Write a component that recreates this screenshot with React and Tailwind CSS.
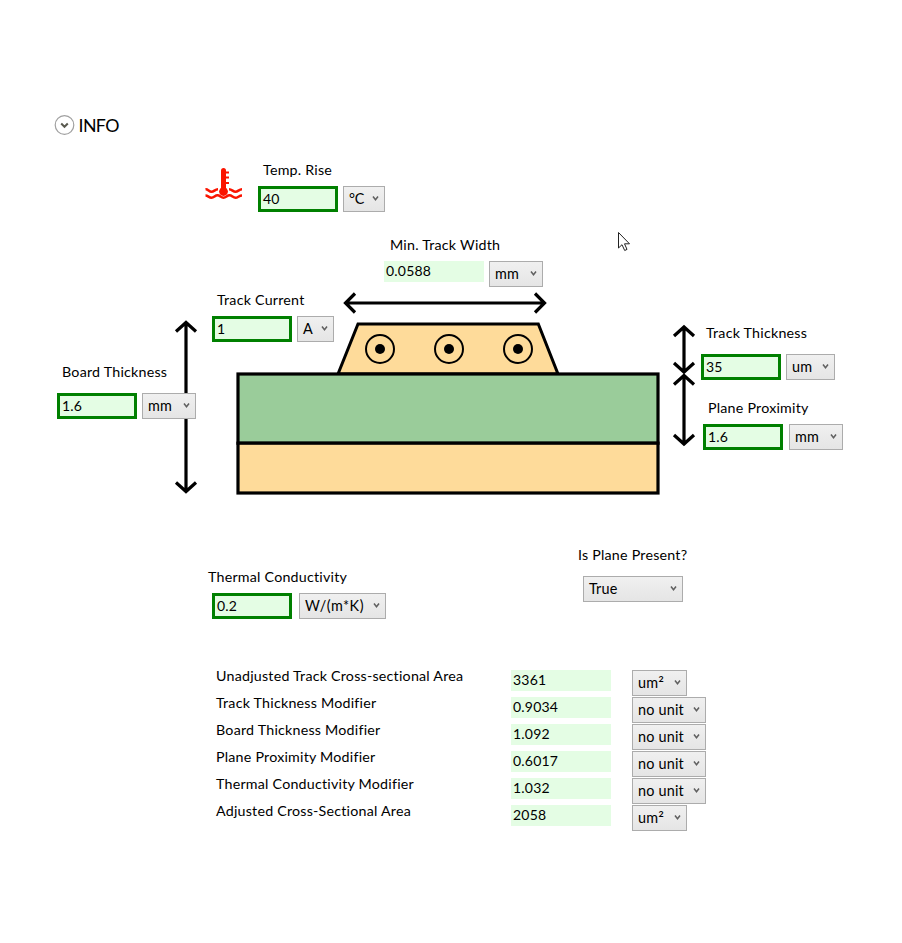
import React from "react";

function Label({ children, className = "" }) {
  return <div className={`h-5 whitespace-nowrap text-[14.25px] leading-5 tracking-[0.22px] ${className}`}>{children}</div>;
}

function Input({ value }) {
  return (
    <div className="h-[26px] w-20 shrink-0 border-[3px] border-[#008000] bg-[#e4fde4] pl-[2px] leading-5">
      {value}
    </div>
  );
}

function Output({ value }) {
  return <div className="h-[21px] w-[100px] shrink-0 bg-[#e4fde4] pl-[2px] leading-5">{value}</div>;
}

function Combo({ children, className = "", textClass = "" }) {
  return (
    <div
      className={`flex h-[26px] shrink-0 items-start justify-between border border-[#acacac] bg-linear-to-b from-[#f0f0f0] to-[#e5e5e5] pl-[5px] pr-[5px] text-[14.4px] leading-6 ${className}`}
    >
      <span className={`whitespace-nowrap ${textClass}`}>{children}</span>
      <svg className="mt-[8px] shrink-0" width="7" height="7" viewBox="0 0 7 7" fill="none">
        <path d="M1 1.500 L3.500 4.800 L6 1.500" stroke="#606060" strokeWidth="1.5" />
      </svg>
    </div>
  );
}

function Unit({ name }) {
  return name === "um²" ? (
    <>
      um<span className="align-[-2px] text-[17px] leading-none">²</span>
    </>
  ) : (
    name
  );
}

function TempIcon() {
  return (
    <svg width="38" height="36" viewBox="0 0 38 36" fill="none" stroke="#fa1400">
      <path d="M18.500 4.500 V25" strokeWidth="5" strokeLinecap="round" />
      <circle cx="18.500" cy="25.500" r="4.400" fill="#fa1400" stroke="none" />
      <path d="M20 6.500 H24 M20 11.500 H24 M20 17 H24" strokeWidth="2" />
      <path d="M0.500 23.300 C3 23 4 25.800 6.500 25.800 C9 25.800 10 23.300 13 23.300" strokeWidth="2.5" />
      <path d="M24 23.300 C27 23.300 28 25.800 30.500 25.800 C33 25.800 34 23.300 37 23.300" strokeWidth="2.5" />
      <path
        d="M0.500 29.500 C3 29.500 4 31.800 6.500 31.800 C9 31.800 10 29.300 12.500 29.300 C15 29.300 16 31.800 18.500 31.800 C21 31.800 22 29.300 24.500 29.300 C27 29.300 28 31.800 30.500 31.800 C33 31.800 34 29.500 37 29.500"
        strokeWidth="2.5"
      />
    </svg>
  );
}

function CurrentSymbol({ cx }) {
  return (
    <g>
      <circle cx={cx} cy="59" r="14" fill="none" stroke="#000" strokeWidth="2" />
      <circle cx={cx} cy="59" r="5" fill="#000" />
    </g>
  );
}

const results = [
  ["Unadjusted Track Cross-sectional Area", "3361", "um²"],
  ["Track Thickness Modifier", "0.9034", "no unit"],
  ["Board Thickness Modifier", "1.092", "no unit"],
  ["Plane Proximity Modifier", "0.6017", "no unit"],
  ["Thermal Conductivity Modifier", "1.032", "no unit"],
  ["Adjusted Cross-Sectional Area", "2058", "um²"],
];

export default function App() {
  return (
    <main className="relative h-[943px] w-[902px] overflow-hidden bg-white pt-[115px] font-[Lato,'Liberation_Sans',sans-serif] text-[14px] tracking-[0.2px] text-black">
      <header className="flex h-5 items-center pl-[54px]">
        <svg width="21" height="21" viewBox="0 0 21 21" fill="none">
          <circle cx="10.500" cy="10" r="9.300" stroke="#a0a0a0" strokeWidth="1.2" />
          <path d="M7.200 8.500 L10.500 11.800 L13.800 8.500" stroke="#5a5a50" strokeWidth="2" />
        </svg>
        <span className="ml-[3.5px] text-[17.8px] leading-5 tracking-[-0.6px]">INFO</span>
      </header>

      <section className="mt-[25px] flex h-[52px] pl-[205px]">
        <div className="mt-[6px] w-[53px]">
          <TempIcon />
        </div>
        <div>
          <Label className="pl-[5px]">Temp. Rise</Label>
          <div className="mt-[6px] flex gap-[5px]">
            <Input value="40" />
            <Combo className="w-[42px]" textClass="tracking-[-0.3px]">°C</Combo>
          </div>
        </div>
      </section>

      <section className="mt-[23px] flex h-[260px] pl-[57px]">
        <div className="relative w-[155px] pt-[127px]">
          <svg className="absolute left-[117px] top-[84px]" width="24" height="176" viewBox="0 0 24 176" fill="none" stroke="#000" strokeWidth="3.2">
            <path d="M12 3.500 V172.500 M2 12.500 L12 3.500 L22 12.500 M2 163.500 L12 172.500 L22 163.500" />
          </svg>
          <Label className="pl-[5px]">Board Thickness</Label>
          <div className="relative mt-[11px] flex gap-[5px]">
            <Input value="1.6" />
            <Combo className="w-[54px]">mm</Combo>
          </div>
        </div>

        <div className="w-[458px]">
          <div className="h-[55px] pl-[172px]">
            <Label className="pl-[6px]">Min. Track Width</Label>
            <div className="mt-[6px] flex gap-[5px]">
              <Output value="0.0588" />
              <Combo className="w-[54px]">mm</Combo>
            </div>
          </div>
          <div className="flex h-[82px]">
            <div className="w-[124px]">
              <Label className="pl-[5px]">Track Current</Label>
              <div className="mt-[6px] flex gap-[5px]">
                <Input value="1" />
                <Combo className="w-[37px]">A</Combo>
              </div>
            </div>
            <svg className="overflow-visible" width="225" height="82" viewBox="0 0 225 82">
              <path d="M9 13 H209 M19 3.500 L9.500 13 L19 22.500 M199 3.500 L208.500 13 L199 22.500" fill="none" stroke="#000" strokeWidth="3.200" />
              <path d="M2 84 L22 34 H202.300 L222 84 Z" fill="#fedb9a" stroke="#000" strokeWidth="3" />
              <CurrentSymbol cx={44} />
              <CurrentSymbol cx={113} />
              <CurrentSymbol cx={182} />
            </svg>
          </div>
          <svg className="ml-6" width="424" height="123" viewBox="0 0 424 123" stroke="#000" strokeWidth="3.200">
            <rect x="2" y="2" width="420" height="69.200" fill="#9acc9a" />
            <rect x="2" y="71.200" width="420" height="49.800" fill="#fedb9a" />
          </svg>
        </div>

        <svg className="mt-[88px] shrink-0" width="28" height="124" viewBox="0 0 28 124" fill="none" stroke="#000" strokeWidth="3.200">
          <path d="M14 4 V49 M4 13 L14 4 L24 13 M4 40 L14 49 L24 40" />
          <path d="M14 52.500 V121 M4 61.500 L14 52.500 L24 61.500 M4 112 L14 121 L24 112" />
        </svg>

        <div className="ml-[3px] pt-[88px]">
          <Label className="pl-[5px]">Track Thickness</Label>
          <div className="mt-[11px] flex gap-[5px]">
            <Input value="35" />
            <Combo className="w-[49px]">um</Combo>
          </div>
          <div className="mt-[18px] pl-[2px]">
            <Label className="pl-[5px]">Plane Proximity</Label>
            <div className="mt-[6px] flex gap-[6px]">
              <Input value="1.6" />
              <Combo className="w-[54px]">mm</Combo>
            </div>
          </div>
        </div>
      </section>

      <section className="mt-[50px] flex h-[74px] pl-[208px]">
        <div className="w-[370px] pt-[22px]">
          <Label>Thermal Conductivity</Label>
          <div className="mt-[6px] flex gap-[7px] pl-1">
            <Input value="0.2" />
            <Combo className="w-[87px]" textClass="tracking-[0.5px]">W/(m*K)</Combo>
          </div>
        </div>
        <div>
          <Label>Is Plane Present?</Label>
          <Combo className="ml-[5px] mt-[11px] w-[100px]">True</Combo>
        </div>
      </section>

      <section className="mt-[47px] flex flex-col pl-[216px]">
        {results.map(([name, value, unit]) => (
          <div key={name} className="flex h-[27px]">
            <Label className="w-[295px]">{name}</Label>
            <div className="mt-1 flex gap-[21px]">
              <Output value={value} />
              <Combo className={unit === "no unit" ? "w-[74px]" : "w-[55px]"}>
                <Unit name={unit} />
              </Combo>
            </div>
          </div>
        ))}
      </section>

      <svg className="absolute left-[617px] top-[231px]" width="14" height="21" viewBox="0 0 14 21">
        <path d="M1.500 1.500 V17 L5 13.700 L7.700 19.500 L10 18.400 L7.500 12.800 H12.500 Z" fill="#fff" stroke="#222" strokeWidth="1" />
      </svg>
    </main>
  );
}
